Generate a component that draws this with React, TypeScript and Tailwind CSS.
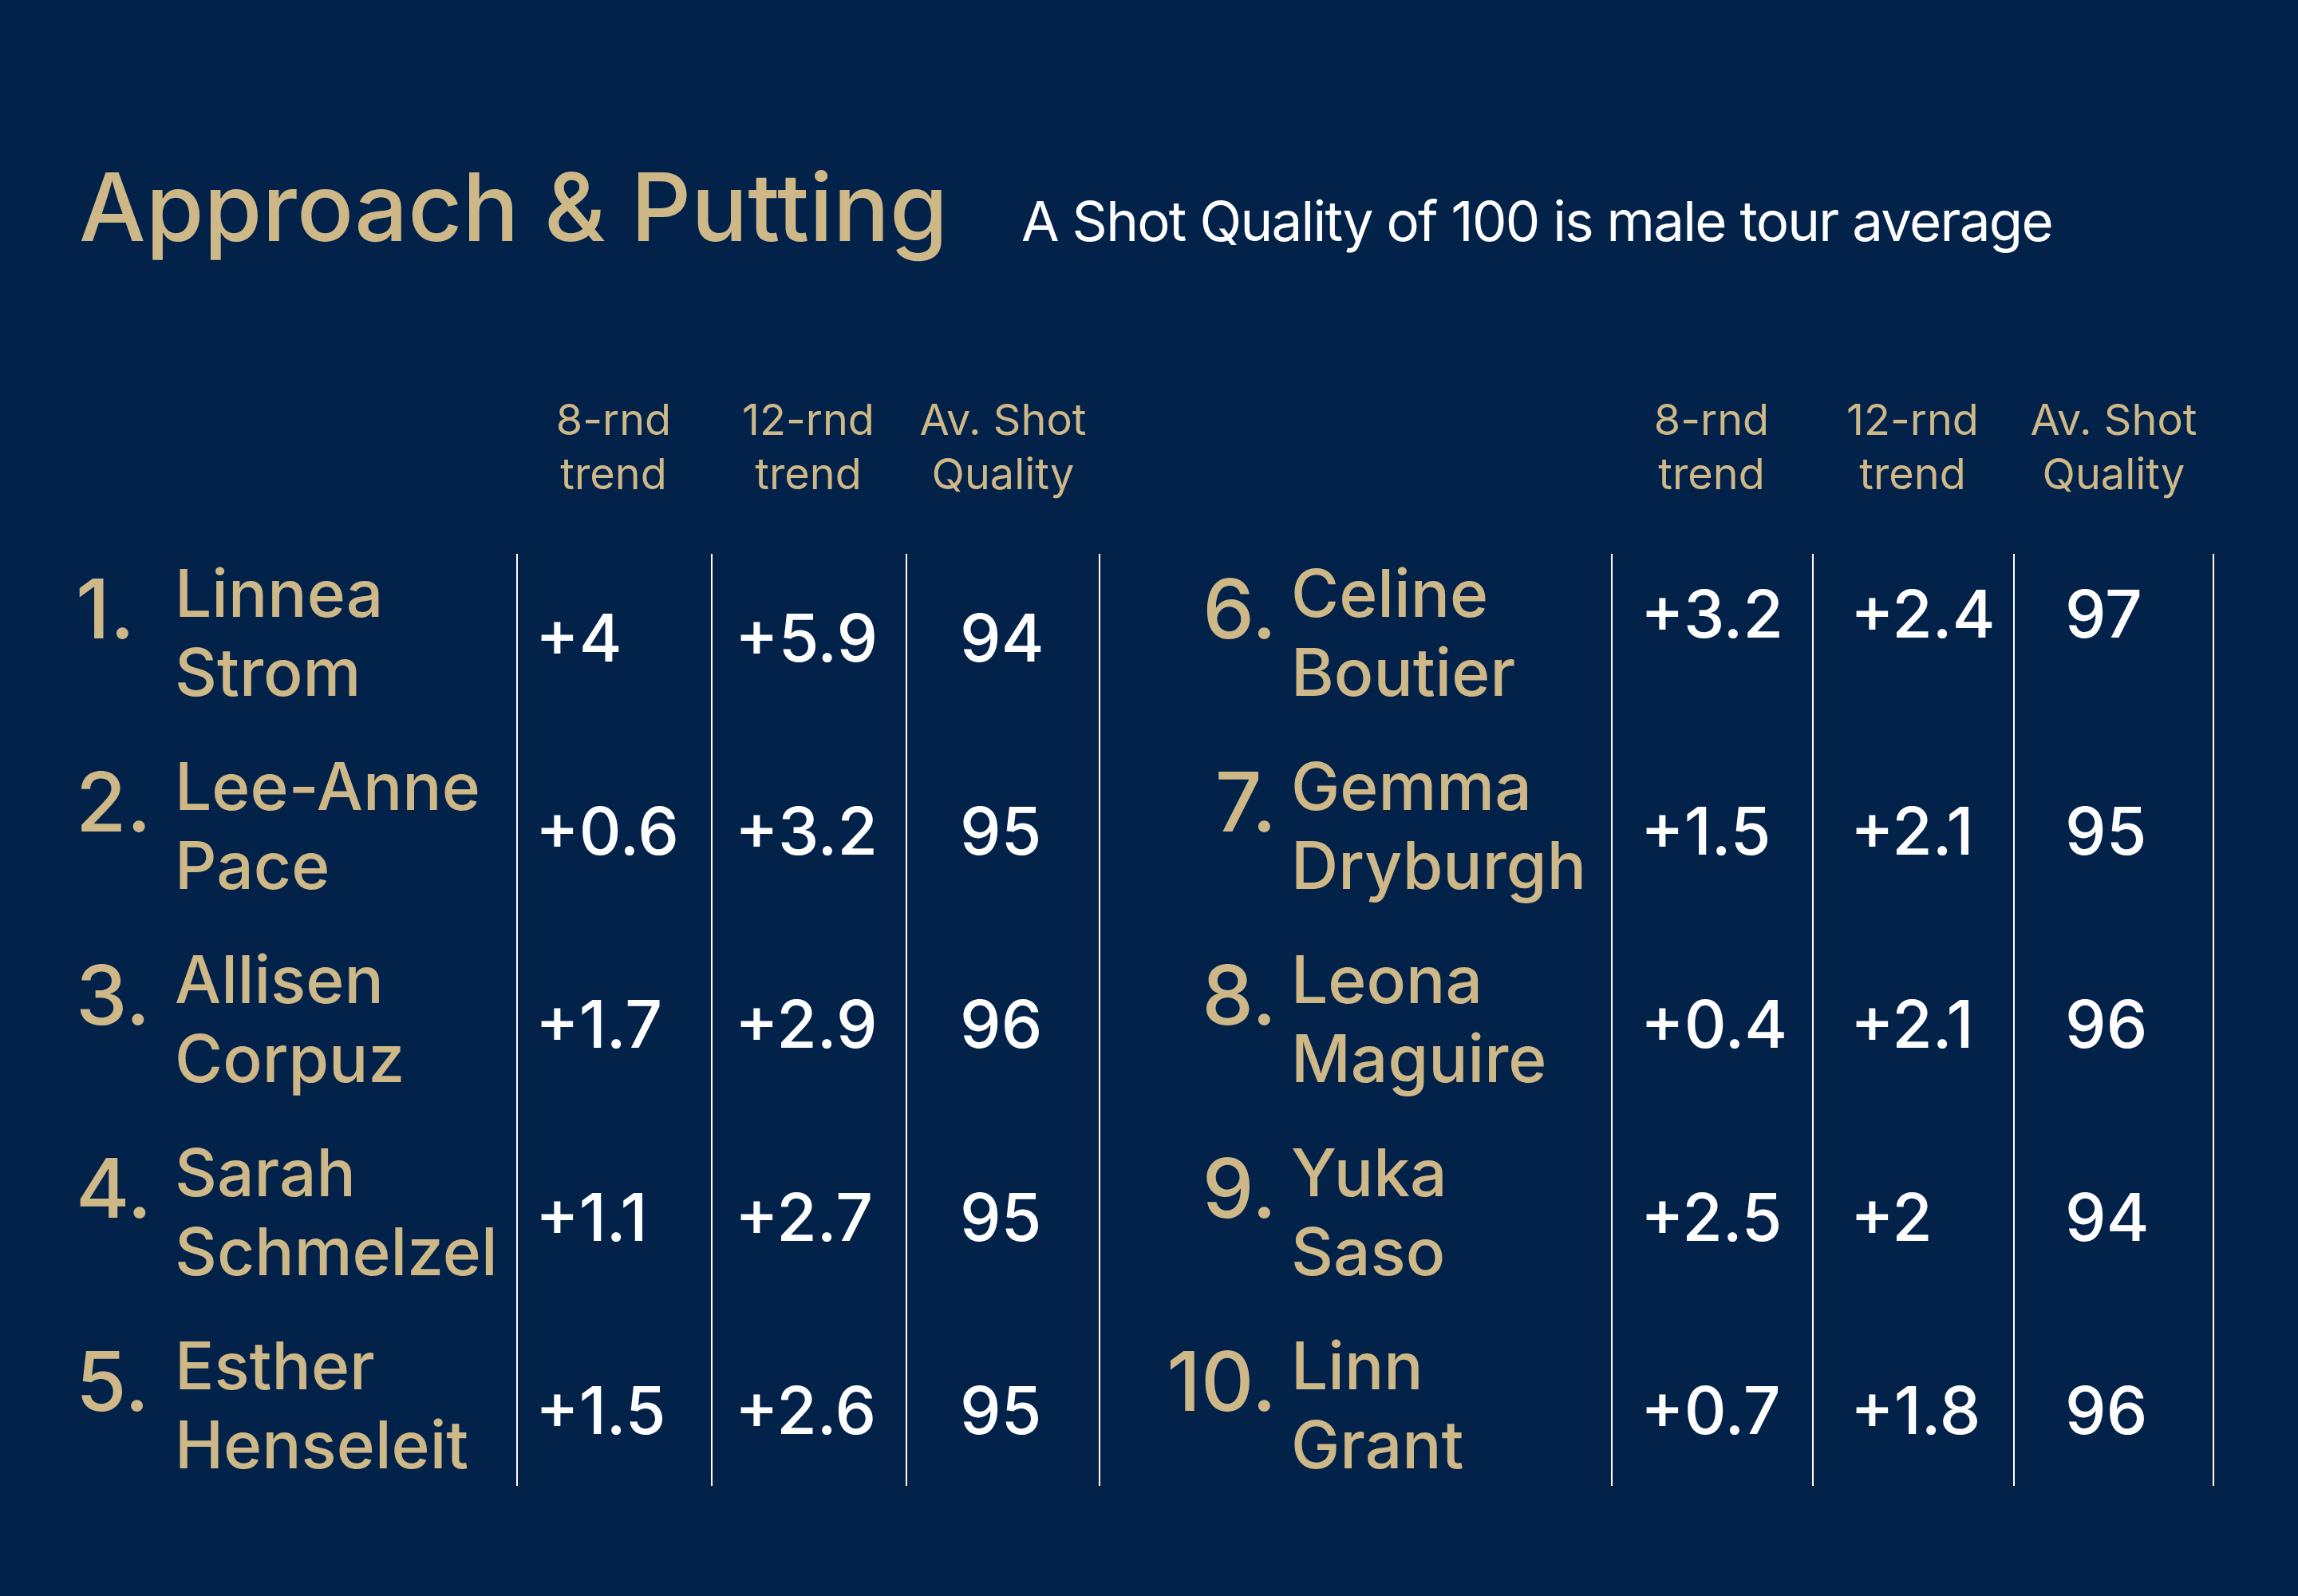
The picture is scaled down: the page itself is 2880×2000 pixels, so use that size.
import React from 'react';

interface Player {
  rank: number;
  first: string;
  last: string;
  trend8: string;
  trend12: string;
  quality: number;
  raised?: boolean;
}

const leftPlayers: Player[] = [
  { rank: 1, first: 'Linnea', last: 'Strom', trend8: '+4', trend12: '+5.9', quality: 94 },
  { rank: 2, first: 'Lee-Anne', last: 'Pace', trend8: '+0.6', trend12: '+3.2', quality: 95 },
  { rank: 3, first: 'Allisen', last: 'Corpuz', trend8: '+1.7', trend12: '+2.9', quality: 96 },
  { rank: 4, first: 'Sarah', last: 'Schmelzel', trend8: '+1.1', trend12: '+2.7', quality: 95 },
  { rank: 5, first: 'Esther', last: 'Henseleit', trend8: '+1.5', trend12: '+2.6', quality: 95 },
];

const rightPlayers: Player[] = [
  { rank: 6, first: 'Celine', last: 'Boutier', trend8: '+3.2', trend12: '+2.4', quality: 97, raised: true },
  { rank: 7, first: 'Gemma', last: 'Dryburgh', trend8: '+1.5', trend12: '+2.1', quality: 95 },
  { rank: 8, first: 'Leona', last: 'Maguire', trend8: '+0.4', trend12: '+2.1', quality: 96 },
  { rank: 9, first: 'Yuka', last: 'Saso', trend8: '+2.5', trend12: '+2', quality: 94 },
  { rank: 10, first: 'Linn', last: 'Grant', trend8: '+0.7', trend12: '+1.8', quality: 96 },
];

interface TableProps {
  players: Player[];
  side: 'left' | 'right';
}

const StatsTable: React.FC<TableProps> = ({ players, side }) => {
  const isLeft = side === 'left';
  const numCol = isLeft ? 'w-[124px] text-left' : 'w-[150px] text-right';
  const nameCol = isLeft ? 'w-[428px]' : 'w-[419px] pl-[18px]';
  const valCol = isLeft ? 'w-[244px]' : 'w-[252px]';
  const pads = isLeft ? ['pl-[22px]', 'pl-[28px]', 'pl-[66px]'] : ['pl-[35px]', 'pl-[46px]', 'pl-[63px]'];

  return (
    <div className="flex flex-col">
      {/* column headings */}
      <div className="flex">
        <div className={numCol} />
        <div className={nameCol} />
        {[['8-rnd', 'trend'], ['12-rnd', 'trend'], ['Av. Shot', 'Quality']].map(([a, b]) => (
          <div key={a} className={`${valCol} text-center text-[54px] leading-[68px] text-[#cfb887]`}>
            <div>{a}</div>
            <div>{b}</div>
          </div>
        ))}
      </div>

      {/* rows: the padding sits inside the cells so the rules run unbroken */}
      <div className="mt-[66px] flex flex-col">
        {players.map((p, i) => {
          const last = i === players.length - 1;
          const valTop = p.raised ? 'pt-[35px]' : 'pt-[65px]';
          const values = [p.trend8, p.trend12, String(p.quality)];
          return (
            <div key={p.rank} className="flex">
              <div className={`${numCol} pt-[17px] text-[103px] leading-none font-medium text-[#cfb887]`}>
                {p.rank}.
              </div>
              <div
                className={`${nameCol} ${last ? 'pb-[2px]' : 'pb-[44px]'} text-[82px] leading-[99px] font-medium text-[#cfb887]`}
              >
                <div>{p.first}</div>
                <div>{p.last}</div>
              </div>
              {values.map((v, j) => (
                <div
                  key={j}
                  className={`${valCol} ${pads[j]} ${valTop} border-l-2 border-white ${j === 2 ? 'border-r-2' : ''} text-[82px] leading-none font-medium text-white`}
                >
                  {v}
                </div>
              ))}
            </div>
          );
        })}
      </div>
    </div>
  );
};

export default function App() {
  return (
    <div className="w-[2880px] h-[2000px] overflow-hidden bg-[#02224a] font-['Inter',sans-serif]">
      <div className="pl-[99px] pt-[200px] flex items-baseline">
        <h1 className="text-[118px] leading-none font-medium text-[#cfb887]">Approach &amp; Putting</h1>
        <p className="ml-[92px] text-[69px] leading-none tracking-[-0.025em] text-white">
          A Shot Quality of 100 is male tour average
        </p>
      </div>

      <div className="mt-[174px] flex pl-[95px]">
        <StatsTable players={leftPlayers} side="left" />
        <div className="ml-[71px]">
          <StatsTable players={rightPlayers} side="right" />
        </div>
      </div>
    </div>
  );
}
